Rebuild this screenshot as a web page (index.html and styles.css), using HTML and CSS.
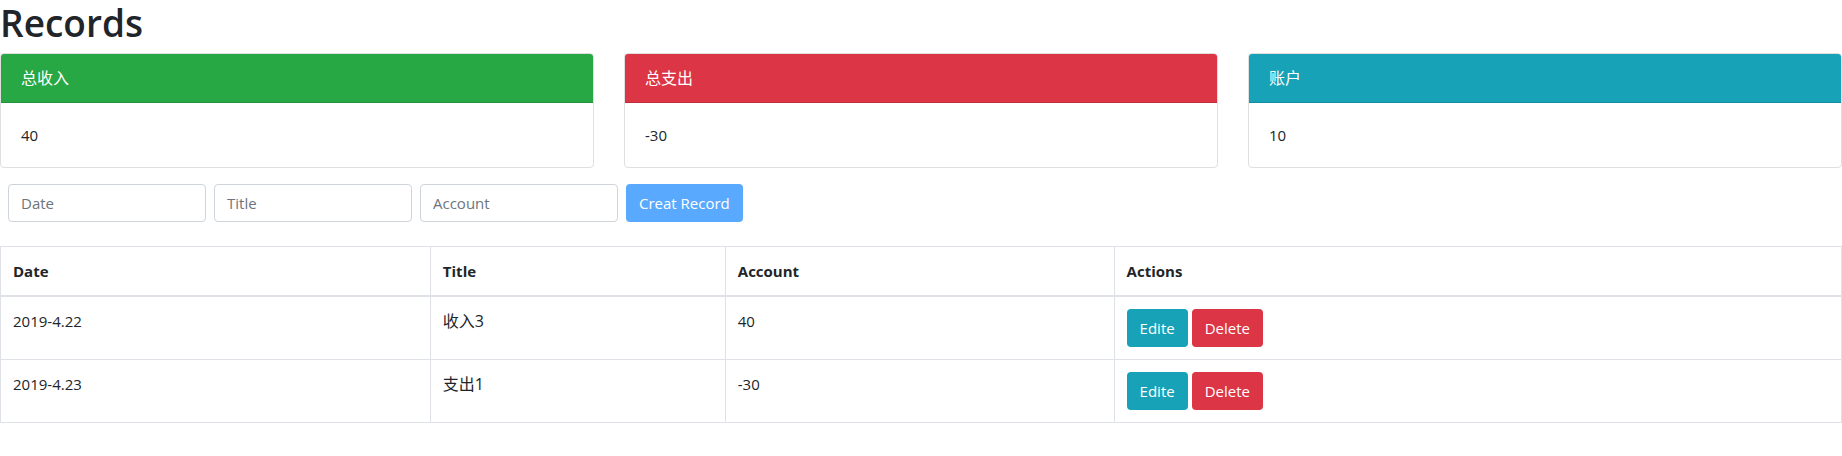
FILE: index.html
```html
<!DOCTYPE html>
<html lang="en">
<head>
<meta charset="utf-8">
<title>Records</title>
<link rel="stylesheet" href="styles.css">
</head>
<body>
<h1 class="title">Records</h1>
<section class="cards">
  <article class="card">
    <div class="card-header income">总收入</div>
    <div class="card-body">40</div>
  </article>
  <article class="card">
    <div class="card-header expense">总支出</div>
    <div class="card-body">-30</div>
  </article>
  <article class="card">
    <div class="card-header balance">账户</div>
    <div class="card-body">10</div>
  </article>
</section>
<form class="record-form">
  <input class="field" type="text" placeholder="Date" aria-label="Date">
  <input class="field" type="text" placeholder="Title" aria-label="Title">
  <input class="field" type="text" placeholder="Account" aria-label="Account">
  <button class="btn primary" type="submit" disabled>Creat Record</button>
</form>
<table class="records">
  <colgroup><col class="col-date"><col class="col-title"><col class="col-account"><col></colgroup>
  <thead>
    <tr><th>Date</th><th>Title</th><th>Account</th><th>Actions</th></tr>
  </thead>
  <tbody>
    <tr>
      <td>2019-4.22</td><td class="name">收入3</td><td>40</td>
      <td><div class="actions"><button class="btn info" type="button">Edite</button><button class="btn danger" type="button">Delete</button></div></td>
    </tr>
    <tr>
      <td>2019-4.23</td><td class="name">支出1</td><td>-30</td>
      <td><div class="actions"><button class="btn info" type="button">Edite</button><button class="btn danger" type="button">Delete</button></div></td>
    </tr>
  </tbody>
</table>
</body>
</html>
```
FILE: styles.css
```css
*, *::before, *::after { box-sizing: border-box; }
body {
  margin: 0;
  font-family: "Open Sans", "Noto Sans", "Noto Sans CJK SC", sans-serif;
  font-size: 15px;
  line-height: 24px;
  color: #212529;
  background: #fff;
}
.title { margin: 0 0 7px; font-size: 37px; line-height: 46px; font-weight: 600; }
.cards { display: grid; grid-template-columns: repeat(3, 1fr); gap: 30px; }
.card { border: 1px solid #dfdfdf; border-radius: 4px; overflow: hidden; }
.card-header { padding: 12px 20px; font-size: 16px; color: #fff; border-bottom: 1px solid rgba(0, 0, 0, .125); }
.income { background: #28a745; }
.expense { background: #dc3545; }
.balance { background: #17a2b8; }
.card-body { padding: 20px; }
.record-form { display: flex; gap: 8px; padding: 16px 8px 24px; }
.field {
  width: 198px;
  height: 38px;
  padding: 6px 12px;
  font: inherit;
  color: #495057;
  border: 1px solid #ced4da;
  border-radius: 4px;
}
.field::placeholder { color: #6c757d; opacity: 1; }
.btn {
  height: 38px;
  padding: 6px 12px;
  font: inherit;
  color: #fff;
  border: 1px solid transparent;
  border-radius: 4px;
}
.primary { background: #59a9ff; }
.info { background: #17a2b8; }
.danger { background: #dc3545; }
.records { width: 100%; border-collapse: collapse; table-layout: fixed; }
.col-date { width: 23.35%; }
.col-title { width: 16.02%; }
.col-account { width: 21.12%; }
.records th, .records td { padding: 12px; border: 1px solid #dee2e6; text-align: left; vertical-align: top; }
.records th { font-weight: 700; border-bottom-width: 2px; }
.records .name { font-size: 16px; }
.actions { display: flex; gap: 4px; }
```
